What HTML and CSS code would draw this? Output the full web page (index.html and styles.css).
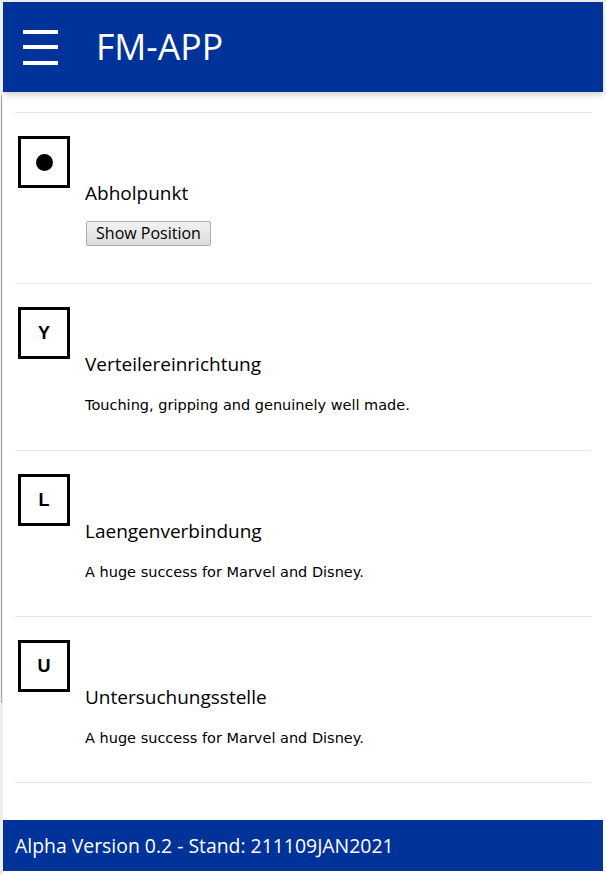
FILE: index.html
```html
<!DOCTYPE html>
<html lang="de">
<head>
<meta charset="utf-8">
<title>FM-APP</title>
<link rel="stylesheet" href="styles.css">
</head>
<body>
<div class="app">
  <header class="topbar">
    <button class="menu-btn" aria-label="Menu">
      <span></span><span></span><span></span>
    </button>
    <h1 class="app-title">FM-APP</h1>
  </header>
  <main class="content">
    <ul class="list">
      <li class="item">
        <div class="sym"><span class="dot"></span></div>
        <div class="body">
          <h2 class="title">Abholpunkt</h2>
          <button class="pos-btn">Show Position</button>
        </div>
      </li>
      <li class="item">
        <div class="sym">Y</div>
        <div class="body">
          <h2 class="title">Verteilereinrichtung</h2>
          <p class="desc">Touching, gripping and genuinely well made.</p>
        </div>
      </li>
      <li class="item">
        <div class="sym">L</div>
        <div class="body">
          <h2 class="title">Laengenverbindung</h2>
          <p class="desc">A huge success for Marvel and Disney.</p>
        </div>
      </li>
      <li class="item">
        <div class="sym">U</div>
        <div class="body">
          <h2 class="title">Untersuchungsstelle</h2>
          <p class="desc">A huge success for Marvel and Disney.</p>
        </div>
      </li>
    </ul>
  </main>
  <footer class="footer">Alpha Version 0.2 - Stand: 211109JAN2021</footer>
</div>
<div class="scroll-thumb"></div>
</body>
</html>
```
FILE: styles.css
```css
html, body {
  margin: 0;
  padding: 0;
  height: 100%;
  background: #ffffff;
}
body {
  border-top: 2px solid #ececec;
  border-left: 3px solid #eeeeee;
  box-sizing: border-box;
  font-family: "Open Sans", "Noto Sans", sans-serif;
  color: #000;
}
.app {
  height: 100%;
  width: 600px;
  display: flex;
  flex-direction: column;
  padding-bottom: 4px;
  box-sizing: border-box;
}
.topbar {
  flex: 0 0 90px;
  background: #003399;
  display: flex;
  align-items: center;
  box-shadow: 0 3px 6px rgba(0,0,0,0.18);
  position: relative;
  z-index: 1;
}
.menu-btn {
  background: none;
  border: 0;
  padding: 0;
  margin-left: 20px;
  width: 35px;
  height: 35px;
  display: flex;
  flex-direction: column;
  justify-content: space-between;
  cursor: pointer;
}
.menu-btn span {
  display: block;
  height: 4px;
  background: #fff;
}
.app-title {
  margin: 0 0 0 38px;
  color: #fff;
  font-weight: 400;
  font-size: 35.6px;
  line-height: 1;
  letter-spacing: 0;
}
.content {
  flex: 1;
  overflow: hidden;
  padding: 20px 12px 0 12px;
}
.list {
  list-style: none;
  margin: 0;
  padding: 0;
}
.item {
  border-top: 1px solid #e6e6e6;
  display: flex;
  padding: 23px 0 0 3px;
  height: 142px;
}
.item:first-child {
  height: 147px;
}
.item:nth-child(2) {
  height: 143px;
}
.item:last-child {
  border-bottom: 1px solid #e6e6e6;
}
.sym {
  flex: 0 0 auto;
  width: 46px;
  height: 46px;
  border: 3px solid #000;
  display: flex;
  align-items: center;
  justify-content: center;
  font-family: "Liberation Sans", Arial, sans-serif;
  font-weight: 700;
  font-size: 18px;
}
.dot {
  width: 17px;
  height: 17px;
  border-radius: 50%;
  background: #000;
}
.body {
  margin-left: 15px;
  padding-top: 45px;
}
.title {
  margin: 0;
  font-weight: 400;
  font-size: 19px;
  line-height: 24px;
}
.desc {
  margin: 20px 0 0 0;
  font-family: "DejaVu Sans", Verdana, sans-serif;
  font-size: 14.5px;
  line-height: 18px;
}
.pos-btn {
  margin-top: 16px;
  margin-left: 1px;
  width: 125px;
  height: 25px;
  padding: 0;
  border: 1px solid #adadad;
  border-radius: 2px;
  background: linear-gradient(#f2f2f2, #dcdcdc);
  font-family: "Open Sans", "Noto Sans", sans-serif;
  font-size: 16px;
  line-height: 23px;
  color: #000;
}
.footer {
  flex: 0 0 51px;
  background: #003399;
  color: #fff;
  font-size: 19.4px;
  display: flex;
  align-items: center;
  padding-left: 12px;
}
.scroll-thumb {
  position: absolute;
  left: 1px;
  top: 95px;
  width: 1px;
  height: 608px;
  background: #a8a8a8;
}
```
